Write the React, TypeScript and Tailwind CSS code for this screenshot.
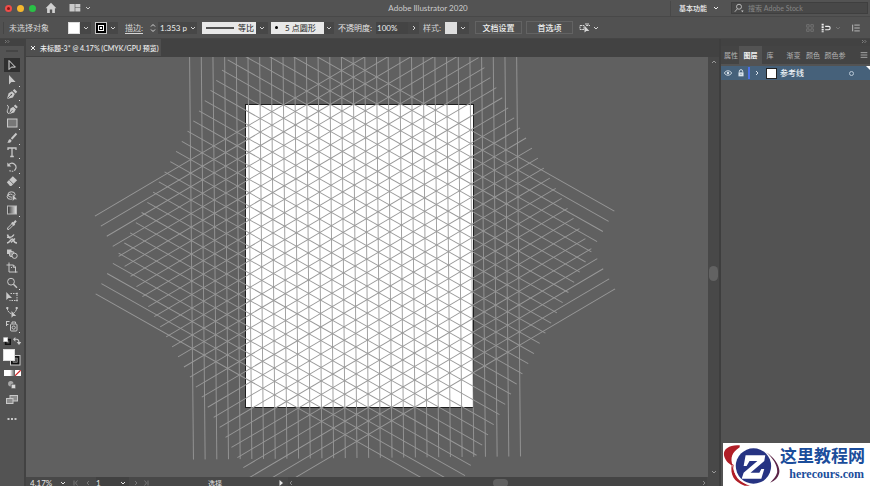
import type { ReactNode } from "react";

const guideOffsets = Array.from({ length: 29 }, (_, i) => (i - 14) * 11.68);

function Chevron({ className = "" }: { className?: string }) {
  return (
    <svg viewBox="0 0 6 6" className={`h-1.5 w-1.5 shrink-0 ${className}`} fill="none" stroke="currentColor" strokeWidth="1">
      <path d="M1 2l2 2 2-2" />
    </svg>
  );
}

function ChevronButton({ label, className = "" }: { label: string; className?: string }) {
  return (
    <button aria-label={label} className={`flex h-3 shrink-0 items-center justify-center bg-[#474747] text-[#d2d2d2] ${className}`}>
      <Chevron />
    </button>
  );
}

function Icon({ children, className = "h-3 w-3" }: { children: ReactNode; className?: string }) {
  return (
    <svg viewBox="0 0 12 12" className={`shrink-0 ${className}`} fill="none" stroke="currentColor" strokeWidth="1" aria-hidden="true">
      {children}
    </svg>
  );
}

const tools: { name: string; more?: boolean; art: ReactNode }[] = [
  { name: "选择工具", art: <path d="M3 1.5v9l2.4-2.4H9.4z" /> },
  { name: "直接选择工具", more: true, art: <path d="M3 1v9.5l2.4-2.4H9.6z" fill="currentColor" stroke="none" /> },
  {
    name: "钢笔工具",
    more: true,
    art: (
      <>
        <path d="M1 11L2.6 5.2 6 3.2 8.8 6 6.900 9.400z" fill="currentColor" stroke="none" />
        <path d="M6.8 2.6l1.6-1.6 2.800 2.800-1.600 1.600z" fill="currentColor" stroke="none" />
        <path d="M1.5 10.5L5 7" stroke="#535353" strokeWidth="0.8" />
        <circle cx="5.4" cy="6.6" r="0.8" fill="#535353" stroke="none" />
      </>
    ),
  },
  {
    name: "曲率工具",
    art: (
      <>
        <path d="M3.2 11L4.4 5.6 7.2 3.8 9.8 6.2 8.200 9.400z" fill="currentColor" stroke="none" />
        <path d="M7.8 3l1.500-1.500 2.500 2.400-1.500 1.500z" fill="currentColor" stroke="none" />
        <path d="M1 2c2 1 1.5 3 .7 4.500S1 10.500 3 10.500" />
        <path d="M3.800 10.200L6.500 7.200" stroke="#535353" strokeWidth="0.800" />
      </>
    ),
  },
  { name: "矩形工具", more: true, art: <rect x="1.5" y="2" width="9.500" height="8" fill="#777777" /> },
  {
    name: "画笔工具",
    more: true,
    art: (
      <>
        <path d="M10.500 1.500L5.500 7" strokeWidth="1.900" />
        <path d="M1.200 10.600c1.300-.3.800-2.600 2.300-3.300 1.200-.4 2.400.8 1.900 2-.6 1.400-2.700 1.800-4.200 1.300z" fill="currentColor" stroke="none" />
      </>
    ),
  },
  { name: "文字工具", more: true, art: <path d="M2 4V2h8v2M6 2v8.500M4.200 10.500h3.600" strokeWidth="1.300" /> },
  {
    name: "旋转工具",
    more: true,
    art: (
      <>
        <path d="M3 3.500a4 4 0 1 1 .5 6" strokeWidth="1.100" strokeDasharray="13 1 1.500 1" />
        <path d="M1.300 1.500v4h4z" fill="currentColor" stroke="none" />
      </>
    ),
  },
  {
    name: "橡皮擦工具",
    more: true,
    art: (
      <>
        <path d="M.8 7.200L6.800 1.300l4.300 4-5.700 5.700H4z" fill="currentColor" stroke="none" />
        <path d="M3.400 5.200l4 4" stroke="#535353" strokeWidth="0.800" />
      </>
    ),
  },
  {
    name: "形状生成器工具",
    art: (
      <>
        <ellipse cx="5.500" cy="4.500" rx="3.600" ry="2.700" />
        <ellipse cx="4.600" cy="6.700" rx="3.500" ry="2.600" />
        <path d="M6.500 4v7.300l1.800-1.700h3z" fill="currentColor" stroke="#535353" strokeWidth="0.500" />
      </>
    ),
  },
  {
    name: "渐变工具",
    more: true,
    art: (
      <>
        <defs>
          <linearGradient id="toolGradient">
            <stop stopColor="#333333" />
            <stop offset="1" stopColor="#e5e5e5" />
          </linearGradient>
        </defs>
        <rect x="1.500" y="2" width="9" height="8" fill="url(#toolGradient)" stroke="#b8b8b8" />
      </>
    ),
  },
  {
    name: "吸管工具",
    art: (
      <>
        <path d="M6.600 4l1.400 1.400-5 5H1.600V9z" />
        <path d="M5.800 3.500l2.700 2.700M7.800 4.200l2.200-2.400" strokeWidth="2" />
      </>
    ),
  },
  {
    name: "宽度工具",
    art: (
      <>
        <path d="M1.500 1.500c.5 2.500 1.500 3.500 3 3.500" strokeWidth="1.500" />
        <path d="M1 4.500c3-.5 4.500 1 7-3" strokeWidth="1.200" />
        <path d="M1 10c3-.5 3.500-4 5.500-4 1.500 0 .5 4 4.500 4" strokeWidth="1.600" />
        <path d="M5 9.500l4-4" strokeWidth="1.200" />
      </>
    ),
  },
  {
    name: "混合工具",
    art: (
      <>
        <rect x="1" y="1.500" width="4.500" height="4.500" fill="currentColor" stroke="none" />
        <rect x="3.500" y="3.500" width="4.500" height="5" rx="1.500" fill="#929292" />
        <circle cx="8.600" cy="7.800" r="2.600" fill="#535353" />
      </>
    ),
  },
  { name: "画板工具", art: <path d="M3 .5V10h8.500M.5 3h7l2 2v5.500M7.300 3v2.300h2.200M5 5.500h1" /> },
  {
    name: "缩放工具",
    more: true,
    art: (
      <>
        <circle cx="5" cy="4.700" r="3.400" />
        <path d="M7.500 7.200l3.500 3.500" strokeWidth="1.500" />
      </>
    ),
  },
  {
    name: "自由变换工具",
    art: (
      <>
        <path d="M.3 1v8l2.200-2h3.500z" fill="currentColor" stroke="none" />
        <path d="M4.500 2.500h6.500v7H3.500" strokeDasharray="1.500 1" />
        <path d="M10.300 1.700h1.500v1.500h-1.500zM10.300 8.700h1.500v1.500h-1.500z" fill="currentColor" stroke="none" />
      </>
    ),
  },
  {
    name: "锚点工具",
    art: (
      <>
        <path d="M1.300 2c0 3 1.700 5 4.700 6 2.500-1 4.500-3 4.700-6" strokeDasharray="2 .6" />
        <path d="M.3 1h2v2h-2zM9.700 1h2v2h-2z" fill="currentColor" stroke="none" />
        <path d="M5.500 5v6.700l1.700-1.600h3z" fill="currentColor" stroke="none" />
      </>
    ),
  },
  {
    name: "符号喷枪工具",
    more: true,
    art: (
      <>
        <rect x="4.500" y="4" width="6.500" height="7" rx="1" />
        <circle cx="7.700" cy="7.600" r="1.600" />
        <path d="M6 3.700V2h3.500v1.700M.5 1.500h3M.5 4.500h2M.5 1v5" />
      </>
    ),
  },
];

function TitleBar() {
  return (
    <header className="flex h-[17px] shrink-0 items-center border-b border-[#484848] bg-[#535353]">
      <div className="flex min-w-0 flex-1 items-center">
        <div className="ml-[5px] flex gap-[5px]">
          <button aria-label="关闭" className="flex h-[7px] w-[7px] items-center justify-center rounded-full bg-[#ef4d49]">
            <span className="h-[3px] w-[3px] rounded-full bg-[#8c1715]" />
          </button>
          <button aria-label="最小化" className="h-[7px] w-[7px] rounded-full bg-[#f6b82e]" />
          <button aria-label="全屏" className="h-[7px] w-[7px] rounded-full bg-[#29c146]" />
        </div>
        <button aria-label="主页" className="ml-[9px] text-[#d0d0d0]">
          <Icon>
            <path d="M6 .8L.6 6.200h1.500V11h2.700V7.500h2.400V11h2.700V6.200h1.500z" fill="currentColor" stroke="none" />
          </Icon>
        </button>
        <button aria-label="排列文档" className="ml-3 flex items-center gap-1 text-[#cacaca]">
          <Icon>
            <path d="M.5 2h5.200v7.500H.5zM6.300 2h5v3.500h-5zM6.300 6h5v3.500h-5z" fill="currentColor" stroke="none" />
          </Icon>
          <Chevron />
        </button>
      </div>
      <h1 className="pr-[14px] text-[8px] leading-3 text-[#cccccc]">Adobe Illustrator 2020</h1>
      <div className="flex min-w-0 flex-1 items-center justify-end">
        <label className="flex h-[15px] items-center gap-1.5 border-l border-[#484848] pl-2 text-[#eeeeee]">
          <select aria-label="工作区" className="w-7 appearance-none bg-transparent text-[7px] leading-3 font-medium outline-none">
            <option>基本功能</option>
          </select>
          <Chevron />
        </label>
        <label className="ml-3 flex h-3 w-[137px] items-center gap-1 border border-[#3f3f3f] bg-[#484848] pl-0.5 text-[#cccccc]">
          <Icon className="h-2.5 w-2.5">
            <circle cx="6" cy="4.500" r="3" />
            <path d="M4 7L1 10.500" />
            <path d="M8.500 9h3L10 11z" fill="currentColor" stroke="none" />
          </Icon>
          <input aria-label="搜索 Adobe Stock" placeholder="搜索 Adobe Stock" className="w-full min-w-0 bg-transparent text-[7px] leading-3 outline-none placeholder:text-[#858585]" />
        </label>
        <span className="w-0.5" />
      </div>
    </header>
  );
}

function ControlBar() {
  return (
    <div className="flex h-[22px] shrink-0 items-center border-b border-[#454545] bg-[#515151] text-[8px] leading-3 whitespace-nowrap text-[#d6d6d6]">
      <span className="ml-[3px] h-3 border-l border-[#454545]" />
      <span className="ml-[5px] w-[59px]">未选择对象</span>
      <button aria-label="填色" className="h-3 w-3 border border-[#dddddd] bg-white" />
      <ChevronButton label="填色选项" className="w-[11px]" />
      <button aria-label="描边颜色" className="ml-1 flex h-3 w-3 items-center justify-center border border-[#c4c4c4] bg-black">
        <span className="flex h-1.5 w-1.5 items-center justify-center border border-white">
          <span className="h-0.5 w-0.5 bg-white" />
        </span>
      </button>
      <ChevronButton label="描边颜色选项" className="w-[11px]" />
      <label htmlFor="weight" className="ml-[7px] w-[22px] underline underline-offset-2">
        描边:
      </label>
      <button aria-label="调整粗细" className="flex w-[11px] justify-center">
        <svg viewBox="0 0 6 10" className="h-2.5 w-1.5" fill="none" stroke="currentColor" strokeWidth="1">
          <path d="M1 3.500l2-2 2 2M1 6.500l2 2 2-2" />
        </svg>
      </button>
      <input id="weight" defaultValue="1.353 p" className="h-3 w-[30px] bg-[#474747] pl-0.5 text-[8px] text-[#eeeeee] outline-none" />
      <ChevronButton label="粗细选项" className="w-[9px]" />
      <label className="ml-[5px] flex h-3 w-[54px] items-center justify-between bg-[#e8e8e8] pr-0.5 pl-1 text-[#222222]">
        <svg viewBox="0 0 28 2" className="h-0.5 w-7" aria-hidden="true">
          <path d="M0 1h28" stroke="#000000" strokeWidth="1.300" />
        </svg>
        <select aria-label="变量宽度配置文件" className="w-4 appearance-none bg-transparent text-[8px] leading-3 outline-none">
          <option>等比</option>
        </select>
      </label>
      <ChevronButton label="宽度配置选项" className="w-3" />
      <label className="ml-[3px] flex h-3 w-[53px] items-center bg-[#e8e8e8] pl-1 text-[#222222]">
        <span className="h-[3px] w-[3px] rounded-full bg-black" />
        <select aria-label="画笔定义" className="ml-[7px] w-9 appearance-none bg-transparent text-[8px] leading-3 outline-none">
          <option>5 点圆形</option>
        </select>
      </label>
      <ChevronButton label="画笔选项" className="w-[10px]" />
      <label htmlFor="opacity" className="ml-1 w-[38px] text-[#e6e6e6]">
        不透明度:
      </label>
      <input id="opacity" defaultValue="100%" className="h-3 w-8 bg-[#444444] pl-px text-[8px] text-[#eeeeee] outline-none" />
      <button aria-label="不透明度选项" className="flex h-3 w-[11px] items-center justify-center bg-[#474747]">
        <Chevron className="-rotate-90" />
      </button>
      <span className="ml-1 w-[22px]">样式:</span>
      <button aria-label="图形样式" className="h-3 w-3 bg-[#dedede]" />
      <ChevronButton label="图形样式选项" className="w-3" />
      <button className="ml-1.5 h-[13px] w-[47px] border border-[#636363] font-medium text-[#eeeeee]">文档设置</button>
      <button className="ml-1 h-[13px] w-[47px] border border-[#636363] font-medium text-[#eeeeee]">首选项</button>
      <button aria-label="选择类似对象" className="ml-1.5 flex items-center gap-0.5">
        <Icon>
          <path d="M1 3.500h4v4H1zM7 1v2.500h4M9 1v2" strokeDasharray="2 .6" />
          <path d="M5.500 3.500v7l1.800-1.600h3z" fill="currentColor" stroke="none" />
        </Icon>
        <Chevron />
      </button>
      <div className="ml-auto flex items-center pr-[9px]">
        <button aria-label="对齐" className="text-[#808080]">
          <Icon className="h-2.5 w-2.5">
            <path d="M2 2h3v3H2zM7 2h3v3H7zM2 7h3v3H2zM7 7h3v3H7z" strokeWidth="0.800" />
          </Icon>
        </button>
        <button aria-label="对齐像素" className="ml-1.5 text-[#eeeeee]">
          <Icon className="h-2.5 w-2.5">
            <path d="M2 1v10" strokeWidth="2.500" strokeDasharray="2 1" />
            <path d="M5 4h4a2 2 0 0 1 0 4H5" strokeWidth="1.300" />
          </Icon>
        </button>
        <Chevron className="ml-1 text-[#757575]" />
        <button aria-label="控制栏菜单" className="ml-2.5 text-[#cccccc]">
          <Icon className="h-2.5 w-2.5">
            <path d="M2 2v8M4 2.500h6.500M4 6h6.500M4 9.500h6.500" />
          </Icon>
        </button>
      </div>
    </div>
  );
}

function Toolbar() {
  return (
    <aside className="flex w-[26px] shrink-0 flex-col border-r-2 border-[#424242] bg-[#535353] text-[#c8c8c8]">
      <div className="h-[7px] bg-[#424242] pl-1 text-[#aaaaaa]">
        <Icon className="h-1.5 w-1.5">
          <path d="M2 2l3 3-3 3M7 2l3 3-3 3" />
        </Icon>
      </div>
      <div className="mx-auto mt-1 h-0.5 w-3 bg-[#454545]" />
      <div className="mt-1.5 flex h-[275px] flex-col justify-between">
        {tools.map((tool, i) => (
          <button
            key={tool.name}
            aria-label={tool.name}
            className={`relative mx-1 flex h-[14px] items-center justify-center ${i === 0 ? "bg-[#303030] text-[#dddddd]" : ""}`}
          >
            <Icon>{tool.art}</Icon>
            {tool.more && <span className="absolute right-0 bottom-0 h-px w-px bg-[#dddddd]" />}
          </button>
        ))}
      </div>
      <div className="mt-1 flex items-center justify-between px-[3px]">
        <button aria-label="默认填色和描边">
          <Icon className="h-2 w-2">
            <rect x="4" y="4" width="7" height="7" stroke="#111111" strokeWidth="2.500" />
            <rect x="1" y="1" width="6" height="6" fill="#ffffff" />
          </Icon>
        </button>
        <button aria-label="互换填色和描边">
          <Icon className="h-2 w-2">
            <path d="M2 3.500h3.500c2.500 0 3.500 1.500 3.500 5" strokeWidth="1.600" />
            <path d="M3.500 0v7L0 3.500zM5.500 7.500h7L9 12z" fill="currentColor" stroke="none" />
          </Icon>
        </button>
      </div>
      <button aria-label="填色和描边" className="mt-1 ml-[3px] h-[17px] w-[18px]">
        <svg viewBox="0 0 18 17" className="h-full w-full">
          <rect x="7.500" y="6.500" width="9.500" height="9.500" fill="#111111" stroke="#cccccc" />
          <rect x="10" y="9" width="4.500" height="4.500" fill="#535353" stroke="#aaaaaa" strokeWidth="0.500" />
          <rect x="0.500" y="0.500" width="11" height="11" fill="#ffffff" stroke="#dddddd" />
        </svg>
      </button>
      <div className="mt-1 ml-1 flex h-1.5 w-[17px]">
        <button aria-label="颜色" className="flex-1 bg-white" />
        <button aria-label="渐变" className="flex-1 bg-linear-to-r from-white to-[#555555]" />
        <button aria-label="无" className="flex-1 bg-white">
          <svg viewBox="0 0 6 6" className="h-full w-full" stroke="#d02020" strokeWidth="1.200">
            <path d="M0 6L6 0" />
          </svg>
        </button>
      </div>
      <button aria-label="绘图模式" className="mt-1 flex justify-center">
        <Icon className="h-2.5 w-2.5">
          <circle cx="4.500" cy="4.500" r="3.200" fill="#a8a8a8" stroke="none" />
          <rect x="5" y="5" width="5.500" height="5.500" rx="1" fill="#d8d8d8" stroke="#535353" />
        </Icon>
      </button>
      <button aria-label="更改屏幕模式" className="mt-1 flex justify-center">
        <Icon>
          <rect x="4" y="1.500" width="7.500" height="5.500" fill="#8d8d8d" />
          <rect x="0.500" y="4.500" width="6.500" height="5" fill="#8d8d8d" />
        </Icon>
      </button>
      <button aria-label="编辑工具栏" className="mt-[7px] flex justify-center">
        <Icon>
          <path d="M1.500 6h2M5 6h2M8.500 6h2" strokeWidth="1.800" />
        </Icon>
      </button>
    </aside>
  );
}

function Artwork() {
  return (
    <svg viewBox="26 57 682 420" preserveAspectRatio="xMidYMid slice" className="min-h-0 min-w-0 flex-1 bg-[#606060]">
      <rect x="245" y="104" width="229" height="304" fill="#1f1f1f" />
      <rect x="246" y="105" width="227" height="302" fill="#ffffff" />
      <g stroke="#989898" strokeWidth="0.900">
        {[-0.55, 59.45, -60.55].map((angle) => (
          <g key={angle} transform={`rotate(${angle} 355 252.500)`}>
            {guideOffsets.map((x) => (
              <line key={x} x1={355 + x} x2={355 + x} y1="47" y2="458" />
            ))}
          </g>
        ))}
      </g>
    </svg>
  );
}

function StatusBar() {
  return (
    <footer className="flex h-[9px] shrink-0 items-start overflow-hidden bg-[#484848] text-[7px] leading-3 text-[#e5e5e5]">
      <label className="flex h-3 w-[45px] items-center gap-0.5 pl-1">
        <select aria-label="缩放级别" className="w-7 appearance-none bg-transparent text-[8px] leading-3 outline-none">
          <option>4.17%</option>
        </select>
        <Chevron />
      </label>
      <div className="flex h-3 w-[25px] items-center gap-1.5 pl-0.5 text-[#777777]">
        <button aria-label="首项">
          <Icon className="h-1.5 w-1.5">
            <path d="M2 1v10M9 1L5 6l4 5" strokeWidth="2" />
          </Icon>
        </button>
        <button aria-label="上一项">
          <Chevron className="rotate-90" />
        </button>
      </div>
      <label className="flex h-3 w-[33px] items-center bg-[#414141]">
        <select aria-label="画板导航" className="w-6 appearance-none bg-transparent text-[8px] leading-3 outline-none">
          <option>1</option>
        </select>
        <Chevron />
      </label>
      <div className="flex h-3 w-[78px] items-center gap-1 pl-1 text-[#777777]">
        <button aria-label="下一项">
          <Chevron className="-rotate-90" />
        </button>
        <button aria-label="末项">
          <Icon className="h-1.5 w-1.5">
            <path d="M10 1v10M3 1l4 5-4 5" strokeWidth="2" />
          </Icon>
        </button>
      </div>
      <span className="w-[71px] pl-px">选择</span>
      <button aria-label="状态栏菜单" className="flex h-3 items-center">
        <Icon className="h-1.5 w-1.5">
          <path d="M3 0l7 6-7 6z" fill="currentColor" stroke="none" />
        </Icon>
      </button>
      <div className="ml-1 flex h-3 flex-1 items-center justify-between bg-[#444444] text-[#888888]">
        <Chevron className="rotate-90" />
        <span className="ml-1.5 h-2 w-[15px] rounded-full bg-[#606060]" />
        <Chevron className="-rotate-90" />
      </div>
      <span className="w-3" />
    </footer>
  );
}

function DocumentArea() {
  return (
    <main className="flex min-w-0 flex-1 flex-col bg-[#424242]">
      <div className="flex h-[18px] shrink-0 pb-px">
        <div className="flex items-center gap-1 bg-[#4f4f4f] pr-0.5 pl-1 text-[7px] leading-3 font-medium text-[#f0f0f0]">
          <button aria-label="关闭文档">
            <Icon className="h-1.5 w-1.5">
              <path d="M2 2l8 8M10 2l-8 8" strokeWidth="2" />
            </Icon>
          </button>
          <span>未标题-3* @ 4.17% (CMYK/GPU 预览)</span>
        </div>
      </div>
      <div className="flex min-h-0 flex-1">
        <Artwork />
        <div className="flex w-[11px] shrink-0 flex-col items-center bg-[#484848] py-0.5 text-[#999999]">
          <Chevron className="rotate-180" />
          <div className="mt-3 flex-1" />
          <span className="h-[15px] w-[9px] rounded-full bg-[#626262]" />
          <div className="flex-1" />
          <Chevron />
        </div>
      </div>
      <StatusBar />
    </main>
  );
}

function LayersPanel() {
  return (
    <aside className="flex w-[151px] shrink-0 flex-col border-l-2 border-[#3e3e3e] bg-[#535353] text-[7px] leading-3">
      <div className="flex h-[7px] justify-end bg-[#424242] pr-[3px] text-[#bbbbbb]">
        <Icon className="h-1.5 w-1.5">
          <path d="M2 2l3 3-3 3M7 2l3 3-3 3" />
        </Icon>
      </div>
      <div className="flex h-[18px] items-stretch bg-[#444444] text-[#b5b5b5]" role="tablist">
        <button role="tab" className="w-[18px] pl-0.5">属性</button>
        <button role="tab" aria-selected="true" className="w-[23px] bg-[#535353] font-bold text-[#f0f0f0]">图层</button>
        <button role="tab" className="w-4">库</button>
        <button role="tab" className="ml-1 w-[23px]">渐变</button>
        <button role="tab" className="w-4">颜色</button>
        <button role="tab" className="w-7">颜色参</button>
        <button aria-label="面板菜单" className="ml-auto pr-0.5">
          <Icon className="h-2 w-2">
            <path d="M1 2.500h10M1 6h10M1 9.500h10" strokeWidth="1.300" />
          </Icon>
        </button>
      </div>
      <div className="mt-0.5 flex h-[14px] items-center bg-[#46617a] text-[#d9e2ea]">
        <button aria-label="切换可视性" className="ml-[3px]">
          <Icon className="h-2 w-2">
            <path d="M.5 6C3 1.500 9 1.500 11.500 6 9 10.500 3 10.500.5 6z" strokeWidth="1.300" />
            <circle cx="6" cy="6" r="1.800" fill="currentColor" stroke="none" />
          </Icon>
        </button>
        <button aria-label="切换锁定" className="ml-[5px]">
          <Icon className="h-2 w-2">
            <path d="M3.500 5V3.500a2.500 2.500 0 0 1 5 0V5" strokeWidth="1.500" />
            <rect x="2.200" y="5" width="7.600" height="6" fill="currentColor" stroke="none" />
            <path d="M6 7v2" stroke="#46617a" />
          </Icon>
        </button>
        <span className="ml-[3px] h-3 w-0.5 bg-[#4b70e8]" />
        <button aria-label="展开图层" className="ml-1">
          <Chevron className="-rotate-90" />
        </button>
        <span className="ml-1.5 h-[11px] w-[11px] border border-[#222222] bg-white" />
        <span className="ml-[3px] text-[8px] font-medium text-[#eef3f7]">参考线</span>
        <button aria-label="定位图层" className="mr-3 ml-auto h-[5px] w-[5px] rounded-full border border-[#b8c8d6]" />
        <svg viewBox="0 0 4 4" className="h-1 w-1 self-start">
          <path d="M0 0h4v4z" fill="#ffffff" />
        </svg>
      </div>
    </aside>
  );
}

function Watermark() {
  return (
    <div className="absolute right-0 bottom-0 flex h-[43px] w-[147px] bg-white font-['Liberation_Serif','Noto_Sans_CJK_SC',serif] font-bold text-[#1b4d9b]">
      <svg viewBox="0 0 58 43" className="h-[43px] w-[57px] shrink-0">
        <path d="M17 2C8 1 0 5 1 12c1 5 4 8 9 11C7 15 9 9 17 4z" fill="#b01e27" />
        <path d="M9 21C7 32 11 39 22 43h6C16 40 10 32 11 22z" fill="#b01e27" />
        <circle cx="31" cy="23" r="18" fill="#263382" />
        <path d="M23 12h20l-1 6-14 12h9l2-4h3l-3 10H19l2-6 14-12h-8l-3 5h-3z" fill="#ffffff" />
        <path d="M44 9c9 6 15 15 13 22-1 4-4 7-9 9 3-3 6-6 7-10 1-6-3-14-11-21z" fill="#5c2447" />
        <path d="M10 22c1 9 7 17 18 21" fill="none" stroke="#ffffff" strokeWidth="0.800" />
      </svg>
      <div className="flex flex-col items-end">
        <span className="mt-1 text-[17px] leading-5 whitespace-nowrap">这里教程网</span>
        <span className="pr-px text-[12px] leading-[14px]">herecours.com</span>
      </div>
    </div>
  );
}

export default function App() {
  return (
    <div className="relative flex h-screen flex-col overflow-hidden bg-[#424242] font-[Lato,'Noto_Sans_CJK_SC',sans-serif]">
      <TitleBar />
      <ControlBar />
      <div className="flex min-h-0 flex-1">
        <Toolbar />
        <DocumentArea />
        <LayersPanel />
      </div>
      <Watermark />
    </div>
  );
}
